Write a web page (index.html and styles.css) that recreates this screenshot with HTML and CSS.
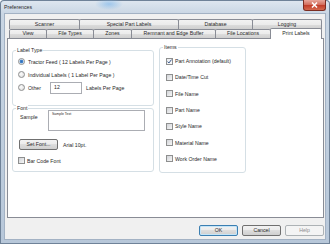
FILE: index.html
```html
<!DOCTYPE html>
<html lang="en">
<head>
    <meta charset="UTF-8">
    <title>Preferences</title>
    <link rel="stylesheet" href="styles.css">
</head>
<body>
    <div class="window">
        <div class="titlebar">
            <span class="title">Preferences</span>
            <span class="close-btn">
                <svg width="7" height="6" viewBox="0 0 7 6"><path d="M1 0.5 L6 5.5 M6 0.5 L1 5.5" stroke="#fff" stroke-width="1.5"/></svg>
            </span>
        </div>

        <div class="client">
            <div class="tabs">
                <div class="tab-row">
                    <div class="tab tab-scanner">Scanner</div>
                    <div class="tab tab-special">Special Part Labels</div>
                    <div class="tab tab-database">Database</div>
                    <div class="tab tab-logging">Logging</div>
                </div>
                <div class="tab-row front">
                    <div class="tab tab-view">View</div>
                    <div class="tab tab-filetypes">File Types</div>
                    <div class="tab tab-zones">Zones</div>
                    <div class="tab tab-remnant">Remnant and Edge Buffer</div>
                    <div class="tab tab-locations">File Locations</div>
                    <div class="tab tab-print selected">Print Labels</div>
                </div>
            </div>

            <div class="panel">
                <div class="col-left">
                    <div class="group group-type">
                        <span class="group-title">Label Type</span>
                        <div class="option-row">
                            <span class="radio checked"></span>
                            <span>Tractor Feed ( 12 Labels Per Page )</span>
                        </div>
                        <div class="option-row">
                            <span class="radio"></span>
                            <span>Individual Labels ( 1 Label Per Page )</span>
                        </div>
                        <div class="option-row">
                            <span class="radio"></span>
                            <span class="other-label">Other</span>
                            <div class="num-input">12</div>
                            <span class="per-page">Labels Per Page</span>
                        </div>
                    </div>

                    <div class="group group-font">
                        <span class="group-title">Font</span>
                        <div class="sample-row">
                            <span class="sample-label">Sample</span>
                            <div class="sample-box">Sample Text</div>
                        </div>
                        <div class="font-row">
                            <div class="btn btn-setfont">Set Font...</div>
                            <span class="font-name">Arial 10pt.</span>
                        </div>
                        <div class="check-row barcode-row">
                            <span class="checkbox"></span>
                            <span>Bar Code Font</span>
                        </div>
                    </div>
                </div>

                <div class="col-right">
                    <div class="group group-items">
                        <span class="group-title">Items</span>
                        <div class="item-row">
                            <span class="checkbox checked">
                                <svg width="5" height="5" viewBox="0 0 5 5"><path d="M0.6 2.6 L1.9 4 L4.5 0.6" fill="none" stroke="#3a5a8c" stroke-width="1"/></svg>
                            </span>
                            <span>Part Annotation (default)</span>
                        </div>
                        <div class="item-row">
                            <span class="checkbox"></span>
                            <span>Date/Time Cut</span>
                        </div>
                        <div class="item-row">
                            <span class="checkbox"></span>
                            <span>File Name</span>
                        </div>
                        <div class="item-row">
                            <span class="checkbox"></span>
                            <span>Part Name</span>
                        </div>
                        <div class="item-row">
                            <span class="checkbox"></span>
                            <span>Style Name</span>
                        </div>
                        <div class="item-row">
                            <span class="checkbox"></span>
                            <span>Material Name</span>
                        </div>
                        <div class="item-row">
                            <span class="checkbox"></span>
                            <span>Work Order Name</span>
                        </div>
                    </div>
                </div>
            </div>

            <div class="buttons">
                <div class="btn btn-ok">OK</div>
                <div class="btn">Cancel</div>
                <div class="btn disabled">Help</div>
            </div>
        </div>
    </div>
</body>
</html>
```

FILE: styles.css
```css
* {
    box-sizing: border-box;
}

body {
    margin: 0;
    padding: 0;
    font-family: "Liberation Sans", Arial, sans-serif;
    font-size: 5.2px;
    color: #2a2a2a;
    background: #fff;
}

.window {
    width: 330px;
    height: 244px;
    display: flex;
    flex-direction: column;
    padding: 0 4px 4px;
    background: linear-gradient(#dfe7f0, #c9d6e4 14px, #b7c7d9);
    border-radius: 4px 4px 0 0;
    box-shadow: inset 0 0 0 1px #6f8298;
}

/* title bar */
.titlebar {
    height: 13px;
    display: flex;
    justify-content: space-between;
    align-items: flex-start;
    background: radial-gradient(ellipse 14px 6px at 105px 4px, rgba(120, 180, 235, 0.6), rgba(120, 180, 235, 0));
}

.title {
    line-height: 7px;
    margin-top: 4px;
}

.close-btn {
    width: 23px;
    height: 11px;
    display: flex;
    align-items: center;
    justify-content: center;
    background: linear-gradient(#e8a79b, #d4705f 45%, #c23f2b 55%, #d56a4f);
    border: 1px solid #7b2d22;
    border-top: none;
    border-radius: 0 0 3px 3px;
}

.client {
    flex: 1;
    display: flex;
    flex-direction: column;
    padding: 6px 2px 0 3px;
    background: #f0f0f0;
    box-shadow: inset 0 0 0 1px #a3b2c4;
}

/* tabs */
.tab-row {
    display: flex;
    padding-left: 2px;
}

.tab {
    height: 10px;
    margin-left: -1px;
    display: flex;
    align-items: center;
    justify-content: center;
    border: 1px solid #898c95;
    border-bottom: none;
    border-radius: 2px 2px 0 0;
    background: linear-gradient(#f2f2f2, #ebebeb 50%, #dddddd 50%, #cfcfcf);
    white-space: nowrap;
    line-height: 1;
}

.tab:first-child {
    margin-left: 0;
}

.front .tab {
    height: 9px;
}

.front .tab.selected {
    height: 11px;
    margin-top: -1px;
    margin-bottom: -1px;
    background: #fff;
    z-index: 1;
}

.tab-scanner { width: 71px; }
.tab-special { width: 100px; }
.tab-database { width: 75px; }
.tab-logging { width: 70px; }
.tab-view { width: 38px; }
.tab-filetypes { width: 48px; }
.tab-zones { width: 39px; }
.tab-remnant { width: 85px; }
.tab-locations { width: 56px; }
.tab-print { width: 52px; }

/* main panel */
.panel {
    height: 180px;
    display: flex;
    align-items: flex-start;
    padding-left: 4px;
    background: #fff;
    border: 1px solid #898c95;
}

.col-left {
    width: 142px;
    margin-top: 11px;
}

.col-right {
    width: 87px;
    margin-left: 5px;
    margin-top: 8px;
}

.group {
    position: relative;
    border: 1px solid #d5dfe5;
    border-radius: 3px;
}

.group-title {
    position: absolute;
    top: -4px;
    left: 3px;
    padding: 0 1px;
    line-height: 7px;
    background: #fff;
}

.group-type {
    height: 56px;
    padding: 4px 0 0 5px;
}

.option-row {
    height: 13px;
    display: flex;
    align-items: center;
}

.radio {
    width: 7px;
    height: 7px;
    margin-right: 3px;
    border: 1px solid #8e8f8f;
    border-radius: 50%;
    background: radial-gradient(circle at 40% 40%, #fdfdfd, #d8d8d8);
}

.radio.checked {
    background: radial-gradient(circle, #2f6bb5 0, #4b8bd0 1.6px, #e6eef6 2.2px, #d5d9de 3.5px);
}

.other-label {
    width: 22px;
}

.num-input {
    width: 32px;
    height: 12px;
    padding: 1px 3px;
    line-height: 6px;
    border: 1px solid #abadb3;
    background: #fff;
}

.per-page {
    margin-left: 4px;
}

.group-font {
    height: 64px;
    margin-top: 2px;
    padding: 1px 0 0 6px;
}

.sample-row {
    display: flex;
}

.sample-label {
    width: 29px;
    padding: 4px 0 0 1px;
    line-height: 6px;
}

.sample-box {
    width: 97px;
    height: 21px;
    padding: 1px 3px;
    font-size: 3.5px;
    line-height: 5px;
    border: 1px solid #abadb3;
    background: #fff;
}

.font-row {
    display: flex;
    align-items: center;
    margin-top: 8px;
}

.font-name {
    margin-left: 5px;
}

.check-row {
    display: flex;
    align-items: center;
}

.barcode-row {
    height: 7px;
    margin-top: 7px;
    margin-left: -1px;
}

.checkbox {
    width: 7px;
    height: 7px;
    margin-right: 2px;
    display: flex;
    align-items: center;
    justify-content: center;
    border: 1px solid #8e8f8f;
    background: linear-gradient(135deg, #d2d4d8, #f6f6f6);
}

.checkbox.checked {
    background: linear-gradient(135deg, #e9ecf0, #fbfbfb);
}

.group-items {
    height: 126px;
    padding: 5px 0 0 6px;
}

.item-row {
    height: 16.3px;
    display: flex;
    align-items: center;
}

/* buttons */
.btn {
    width: 39px;
    height: 11px;
    display: flex;
    align-items: center;
    justify-content: center;
    border: 1px solid #707070;
    border-radius: 2px;
    background: linear-gradient(#f2f2f2, #ebebeb 50%, #dddddd 50%, #cfcfcf);
    line-height: 1;
}

.btn-ok {
    border-color: #3c7fb1;
    box-shadow: inset 0 0 0 1px #c4e5f8;
}

.btn.disabled {
    color: #8d8d8d;
    border-color: #adb2b5;
    background: #f4f4f4;
}

.buttons {
    display: flex;
    justify-content: flex-end;
    gap: 4px;
    margin-top: 7px;
}
```
